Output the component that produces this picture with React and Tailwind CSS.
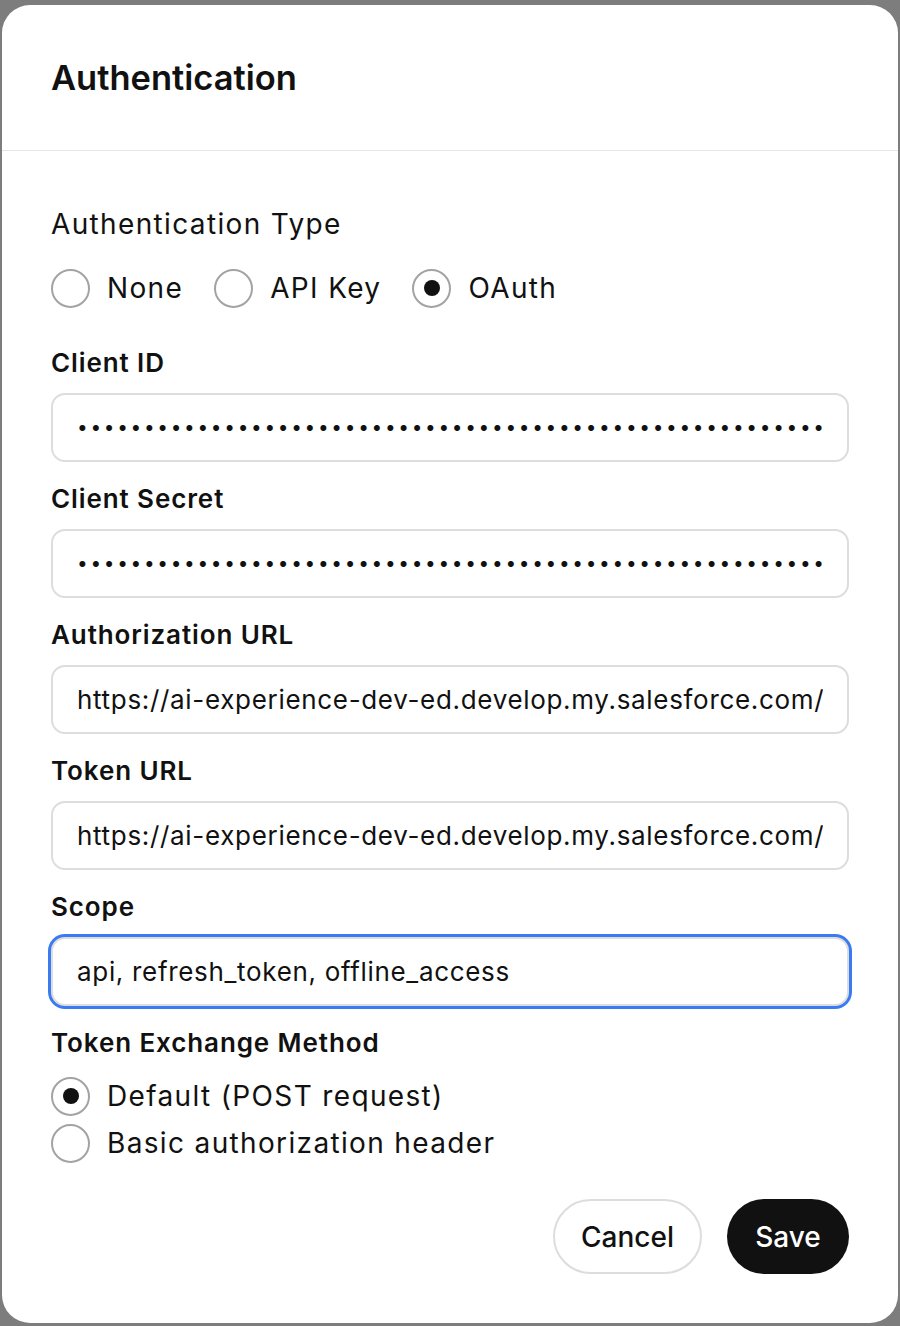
import { useState } from "react";

function Radio({ checked, label, onClick }) {
  return (
    <button type="button" onClick={onClick} className="flex items-center gap-[17px] h-10 text-left">
      <span className="w-[39px] h-[39px] rounded-full border-2 border-[#a3a3a3] flex items-center justify-center shrink-0">
        {checked && <span className="w-4 h-4 rounded-full bg-[#111111]" />}
      </span>
      <span className="text-[28px] leading-[36px] tracking-[1.35px] text-[#111111]">{label}</span>
    </button>
  );
}

function Field({ label, value, type = "text", focused }) {
  const masked = type === "password";
  return (
    <div className="mt-[22px] first:mt-0">
      <label className="block text-[26px] leading-[30px] font-semibold tracking-[0.9px] text-[#111111]">{label}</label>
      <input
        type={type}
        defaultValue={value}
        readOnly
        className={
          "mt-[15px] block w-full h-[69px] rounded-[14px] border-2 border-[#dddddd] bg-white px-[24px] text-[#111111] outline-none " +
          (masked ? "text-[19px] tracking-[2.7px] " : "text-[26px] tracking-[0.68px] ") +
          (focused ? "ring-[3px] ring-[#3a7bf4]" : "")
        }
      />
    </div>
  );
}

export default function App() {
  const [authType, setAuthType] = useState("oauth");
  const [method, setMethod] = useState("default");
  const secret = "x".repeat(80);

  return (
    <div className="min-h-screen bg-[#7d7d7d] pt-[5px] pl-[2px]" style={{ fontFamily: "Inter, 'Noto Sans', sans-serif" }}>
      <div className="w-[896px] bg-white rounded-[28px] overflow-hidden">
        <div className="h-[146px] flex items-center px-[49px] border-b border-[#e6e6e6]">
          <h2 className="text-[34.5px] font-semibold text-[#111111]">Authentication</h2>
        </div>

        <div className="px-[49px] pt-[55px] pb-[49px]">
          <h3 className="text-[28px] leading-[36px] tracking-[1.35px] text-[#111111]">Authentication Type</h3>
          <div className="mt-[26px] flex items-center gap-[31px]">
            <Radio label="None" checked={authType === "none"} onClick={() => setAuthType("none")} />
            <Radio label="API Key" checked={authType === "api"} onClick={() => setAuthType("api")} />
            <Radio label="OAuth" checked={authType === "oauth"} onClick={() => setAuthType("oauth")} />
          </div>

          <div className="mt-[40px]">
            <Field label="Client ID" type="password" value={secret} />
            <Field label="Client Secret" type="password" value={secret} />
            <Field label="Authorization URL" value="https://ai-experience-dev-ed.develop.my.salesforce.com/services/oauth2/authorize" />
            <Field label="Token URL" value="https://ai-experience-dev-ed.develop.my.salesforce.com/services/oauth2/token" />
            <Field label="Scope" value="api, refresh_token, offline_access" focused />
          </div>

          <div className="mt-[22px]">
            <div className="text-[26px] leading-[30px] font-semibold tracking-[0.9px] text-[#111111]">Token Exchange Method</div>
            <div className="mt-[18px] flex flex-col gap-[7px]">
              <Radio label="Default (POST request)" checked={method === "default"} onClick={() => setMethod("default")} />
              <Radio label="Basic authorization header" checked={method === "basic"} onClick={() => setMethod("basic")} />
            </div>
          </div>

          <div className="mt-[36px] flex justify-end gap-[25px]">
            <button type="button" className="w-[149px] h-[75px] rounded-full border-2 border-[#dddddd] text-[28px] font-medium text-[#111111]">
              Cancel
            </button>
            <button type="button" className="w-[122px] h-[75px] rounded-full bg-[#111111] text-[28px] font-medium text-white">
              Save
            </button>
          </div>
        </div>
      </div>
    </div>
  );
}
